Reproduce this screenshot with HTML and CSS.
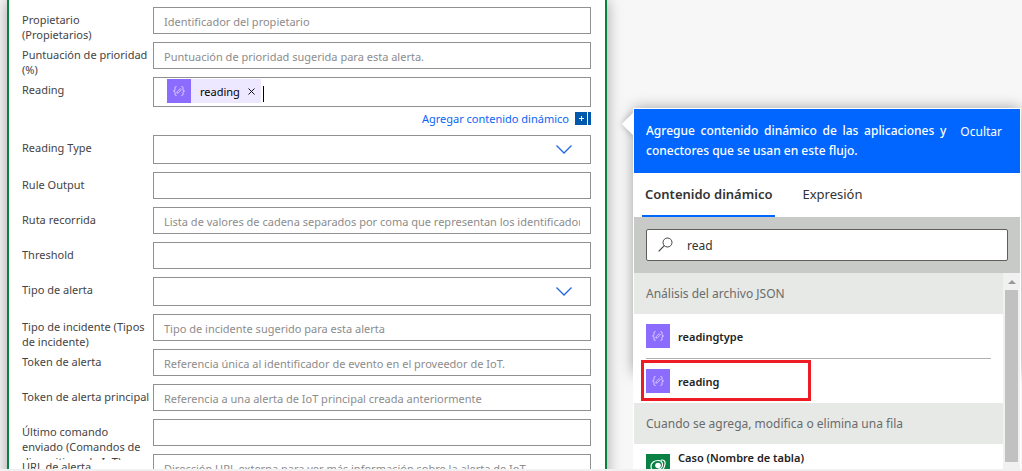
FILE: index.html
```html
<!DOCTYPE html>
<html lang="es">

<head>
    <meta charset="UTF-8">
    <meta name="viewport" content="width=device-width, initial-scale=1.0">
    <title>Editar flujo</title>
    <link rel="stylesheet" href="styles.css">
</head>

<body>
    <!-- shared icons -->
    <svg class="sprite" aria-hidden="true">
        <symbol id="json" viewBox="0 0 24 24">
            <path d="M9.5 7.5C8 7.5 8 8.200 8 9.500C8 11 8 11.700 6.500 12C8 12.300 8 13 8 14.500C8 15.800 8 16.500 9.500 16.500M14.500 7.500C16 7.500 16 8.200 16 9.500C16 11 16 11.700 17.500 12C16 12.300 16 13 16 14.500C16 15.800 16 16.500 14.500 16.500" fill="none" stroke="#e4dbff" />
            <path d="M9.800 14.200L10.300 12.500L13.200 9.600L14.400 10.800L11.500 13.700Z" fill="none" stroke="#e4dbff" stroke-width=".8" />
        </symbol>
        <symbol id="chevron" viewBox="0 0 16 9">
            <path d="M.5 .5L8 8L15.500 .5" fill="none" stroke="#2266e3" stroke-width="1.300" />
        </symbol>
    </svg>

    <main class="workspace">
        <form class="card">
            <div class="row">
                <label for="owner">Propietario (Propietarios)</label>
                <input class="field" id="owner" type="text" placeholder="Identificador del propietario">
            </div>
            <div class="row">
                <label for="score">Puntuación de prioridad (%)</label>
                <input class="field" id="score" type="text" placeholder="Puntuación de prioridad sugerida para esta alerta.">
            </div>
            <div class="row row-token">
                <label for="reading">Reading</label>
                <div class="field token-field">
                    <span class="token">
                        <svg class="icon"><use href="#json" /></svg>
                        <span class="token-name">reading</span>
                        <button class="token-close" type="button" aria-label="Quitar">
                            <svg viewBox="0 0 7 7"><path d="M.5 .5L6.500 6.500M6.500 .5L.5 6.500" fill="none" stroke="#111" /></svg>
                        </button>
                    </span>
                    <span class="caret"></span>
                    <input id="reading" type="text">
                </div>
            </div>
            <div class="add-row">
                <a href="#panel">Agregar contenido dinámico</a>
                <svg class="add-icon" viewBox="0 0 16 13">
                    <path d="M0 0H12V13H0ZM13 0H16V13H13Z" fill="#0058ad" />
                    <path d="M6.500 4V9M4 6.500H9" stroke="#fff" />
                </svg>
            </div>
            <div class="row">
                <label for="rtype">Reading Type</label>
                <div class="select">
                    <select class="field" id="rtype"><option></option></select>
                    <svg><use href="#chevron" /></svg>
                </div>
            </div>
            <div class="row">
                <label for="output">Rule Output</label>
                <input class="field" id="output" type="text">
            </div>
            <div class="row">
                <label for="path">Ruta recorrida</label>
                <input class="field" id="path" type="text" placeholder="Lista de valores de cadena separados por coma que representan los identificadores">
            </div>
            <div class="row">
                <label for="threshold">Threshold</label>
                <input class="field" id="threshold" type="text">
            </div>
            <div class="row">
                <label for="alert">Tipo de alerta</label>
                <div class="select">
                    <select class="field" id="alert"><option></option></select>
                    <svg><use href="#chevron" /></svg>
                </div>
            </div>
            <div class="row">
                <label for="incident">Tipo de incidente (Tipos de incidente)</label>
                <input class="field" id="incident" type="text" placeholder="Tipo de incidente sugerido para esta alerta">
            </div>
            <div class="row">
                <label for="token">Token de alerta</label>
                <input class="field" id="token" type="text" placeholder="Referencia única al identificador de evento en el proveedor de IoT.">
            </div>
            <div class="row">
                <label for="parent">Token de alerta principal</label>
                <input class="field" id="parent" type="text" placeholder="Referencia a una alerta de IoT principal creada anteriormente">
            </div>
            <div class="row">
                <label for="command">Último comando enviado (Comandos de dispositivos de IoT)</label>
                <input class="field" id="command" type="text">
            </div>
            <div class="row">
                <label for="url">URL de alerta</label>
                <input class="field" id="url" type="text" placeholder="Dirección URL externa para ver más información sobre la alerta de IoT.">
            </div>
        </form>

        <aside class="panel" id="panel">
            <header class="panel-head">
                <p>Agregue contenido dinámico de las aplicaciones y conectores que se usan en este flujo.</p>
                <button type="button">Ocultar</button>
            </header>
            <nav class="tabs">
                <button class="tab active" type="button">Contenido dinámico</button>
                <button class="tab" type="button">Expresión</button>
            </nav>
            <div class="search">
                <div class="search-box">
                    <svg viewBox="0 0 15 15">
                        <circle cx="9.500" cy="5.500" r="4.500" fill="none" stroke="#444" />
                        <path d="M6.300 8.700L.7 14.300" stroke="#444" stroke-width="1.200" />
                    </svg>
                    <input type="text" value="read" aria-label="Buscar contenido dinámico">
                </div>
            </div>
            <div class="results">
                <div class="list">
                    <h2>Análisis del archivo JSON</h2>
                    <button class="item" type="button">
                        <svg class="icon"><use href="#json" /></svg>
                        <span>readingtype</span>
                    </button>
                    <hr>
                    <button class="item marked" type="button">
                        <svg class="icon"><use href="#json" /></svg>
                        <span>reading</span>
                    </button>
                    <h2>Cuando se agrega, modifica o elimina una fila</h2>
                    <button class="item item-top" type="button">
                        <svg class="icon icon-green" viewBox="0 0 24 24">
                            <g fill="none" stroke="#fff" stroke-width="1.200">
                                <path d="M12 18.500C7.500 18.500 5 15.500 5 12.500C5 8.500 8.500 6.500 12 6.500C15.500 6.500 16.500 9 16.500 11C16.500 13.500 14.500 15 12 15" />
                                <path d="M15 6.200C17.500 5.500 19.500 7 19 10C18.500 14 15.500 17.500 12 18.500" />
                            </g>
                            <circle cx="12" cy="11.500" r="2.800" fill="#fff" />
                        </svg>
                        <span>Caso (Nombre de tabla)</span>
                    </button>
                </div>
                <div class="scrollbar">
                    <svg viewBox="0 0 8 4"><path d="M4 0L8 4H0Z" fill="#999" /></svg>
                    <div class="thumb"></div>
                </div>
            </div>
        </aside>
    </main>
</body>

</html>
```
FILE: styles.css
```css
*,
*::before,
*::after {
    box-sizing: border-box;
    margin: 0;
    padding: 0;
}

body,
button,
input,
select {
    font-family: "Noto Sans", "Open Sans", sans-serif;
    font-size: 11px;
}

button {
    border: 0;
    background: none;
    text-align: left;
}

.sprite {
    position: absolute;
    width: 0;
    height: 0;
}

.workspace {
    position: relative;
    z-index: 0;
    display: flex;
    gap: 26px;
    height: 100vh;
    padding: 0 1px 0 7px;
    overflow: hidden;
    background: #f7f7f7;
    border-bottom: 2px solid #f0f0f0;
}

/* form card */
.card {
    flex: 1;
    min-width: 0;
    height: max-content;
    padding: 7px 14px 7px 13px;
    background: #fff;
    border: 2px solid #0b8043;
    border-width: 0 2px;
    box-shadow: 0 0 14px rgba(0, 0, 0, .35);
}

.row {
    display: grid;
    grid-template-columns: 131px 1fr;
    align-items: start;
    margin-bottom: 8px;
}

.row-token {
    margin-bottom: 0;
}

/* long labels run under the next row and are cut there */
.row label {
    max-height: 41px;
    margin-bottom: -14px;
    padding: 5px 3px 0 0;
    overflow: hidden;
    line-height: 15px;
    color: #444;
}

.field {
    width: 100%;
    height: 27px;
    padding: 1px 10px 0;
    background: #fff;
    border: 1px solid #919191;
    border-radius: 0;
    outline: none;
}

.field::placeholder {
    color: #8c8c8c;
}

.token-field {
    display: flex;
    align-items: flex-start;
    height: 30px;
    padding: 1px 13px;
}

.token {
    display: flex;
    align-items: center;
    height: 24px;
    padding-right: 6px;
    background: #ede7ff;
}

.token-name {
    margin: 0 8px 0 9px;
    color: #000;
}

.token-close,
.token-close svg {
    display: block;
    width: 7px;
    height: 7px;
}

.caret {
    width: 1px;
    height: 16px;
    margin: 7px 0 0 2px;
    background: #000;
}

.token-field input {
    flex: 1;
    min-width: 0;
    height: 24px;
    border: 0;
    outline: none;
}

.icon {
    flex: none;
    width: 24px;
    height: 24px;
    background: #8c6cff;
}

.icon-green {
    background: #088142;
}

.add-row {
    display: flex;
    align-items: center;
    justify-content: flex-end;
    gap: 6px;
    height: 28px;
    padding-bottom: 5px;
}

.add-row a {
    color: #0a64f5;
    text-decoration: none;
}

.add-icon {
    width: 16px;
    height: 13px;
}

.select {
    display: grid;
    align-items: center;
}

.select .field,
.select svg {
    grid-area: 1 / 1;
}

.select .field {
    height: 29px;
    appearance: none;
}

.select svg {
    justify-self: end;
    width: 16px;
    height: 9px;
    margin-right: 19px;
    pointer-events: none;
}

/* dynamic content panel */
.panel {
    position: relative;
    display: flex;
    flex: 0 0 388px;
    flex-direction: column;
    height: calc(100vh - 110px);
    margin-top: 108px;
    background: #fff;
    border: 1px solid #fff;
    border-bottom: 0;
}

.panel::before {
    content: "";
    position: absolute;
    inset: 0 0 auto;
    z-index: -1;
    height: 264px;
    box-shadow: 0 0 14px rgba(0, 0, 0, .4);
}

/* beak */
.panel::after {
    content: "";
    position: absolute;
    top: 7px;
    left: -9px;
    z-index: -1;
    width: 16px;
    height: 16px;
    background: #fff;
    box-shadow: 0 0 6px rgba(0, 0, 0, .25);
    transform: rotate(45deg);
}

.panel-head {
    display: flex;
    align-items: flex-start;
    gap: 14px;
    padding: 12px 18px 12px 12px;
    background: #0066ff;
}

.panel-head p {
    flex: 1;
    font-size: 12px;
    font-weight: 500;
    line-height: 20px;
    color: #fff;
    text-align: justify;
}

.panel-head button {
    font-size: 12px;
    line-height: 22px;
    color: #fff;
}

.tabs {
    display: flex;
    gap: 24px;
    height: 44px;
    padding: 0 8px;
}

.tab {
    padding: 0 3px;
    font-size: 13px;
    color: #333;
    border-bottom: 2px solid transparent;
}

.tab.active {
    font-weight: 600;
    border-color: #0066ff;
}

.search {
    padding: 12px;
    background: #c8cac7;
}

.search-box {
    display: flex;
    align-items: center;
    height: 32px;
    padding: 0 11px;
    background: #fff;
    border: 1px solid #605e5c;
    border-radius: 2px;
}

.search-box svg {
    flex: none;
    width: 15px;
    height: 15px;
    margin-bottom: 2px;
}

.search-box input {
    flex: 1;
    min-width: 0;
    margin-left: 14px;
    font-size: 12px;
    color: #333;
    border: 0;
    outline: none;
}

.results {
    display: flex;
    flex: 1;
    min-height: 0;
}

.list {
    flex: 1;
    min-width: 0;
    overflow: hidden;
}

.list h2 {
    padding: 0 12px;
    font-size: 12px;
    font-weight: 400;
    line-height: 41px;
    color: #6b6b6b;
    background: #e6e9e6;
}

.list hr {
    margin: 0 12px;
    border: 0;
    border-top: 1px solid #b0b0b0;
}

.item {
    position: relative;
    display: flex;
    align-items: center;
    gap: 8px;
    width: 100%;
    height: 44px;
    padding: 0 12px;
    font-weight: 600;
    color: #222;
}

.marked::after {
    content: "";
    position: absolute;
    top: 1px;
    left: 7px;
    width: 170px;
    height: 41px;
    border: 3px solid #ed1c24;
}

.item-top span {
    align-self: flex-start;
    margin-top: 6px;
}

.scrollbar {
    display: flex;
    flex: 0 0 17px;
    flex-direction: column;
    align-items: center;
    gap: 6px;
    padding: 7px 2px;
    background: #f1f1f1;
}

.scrollbar svg {
    flex: none;
    width: 8px;
    height: 4px;
}

.thumb {
    flex: 1;
    width: 13px;
    background: #c1c1c1;
}
```
